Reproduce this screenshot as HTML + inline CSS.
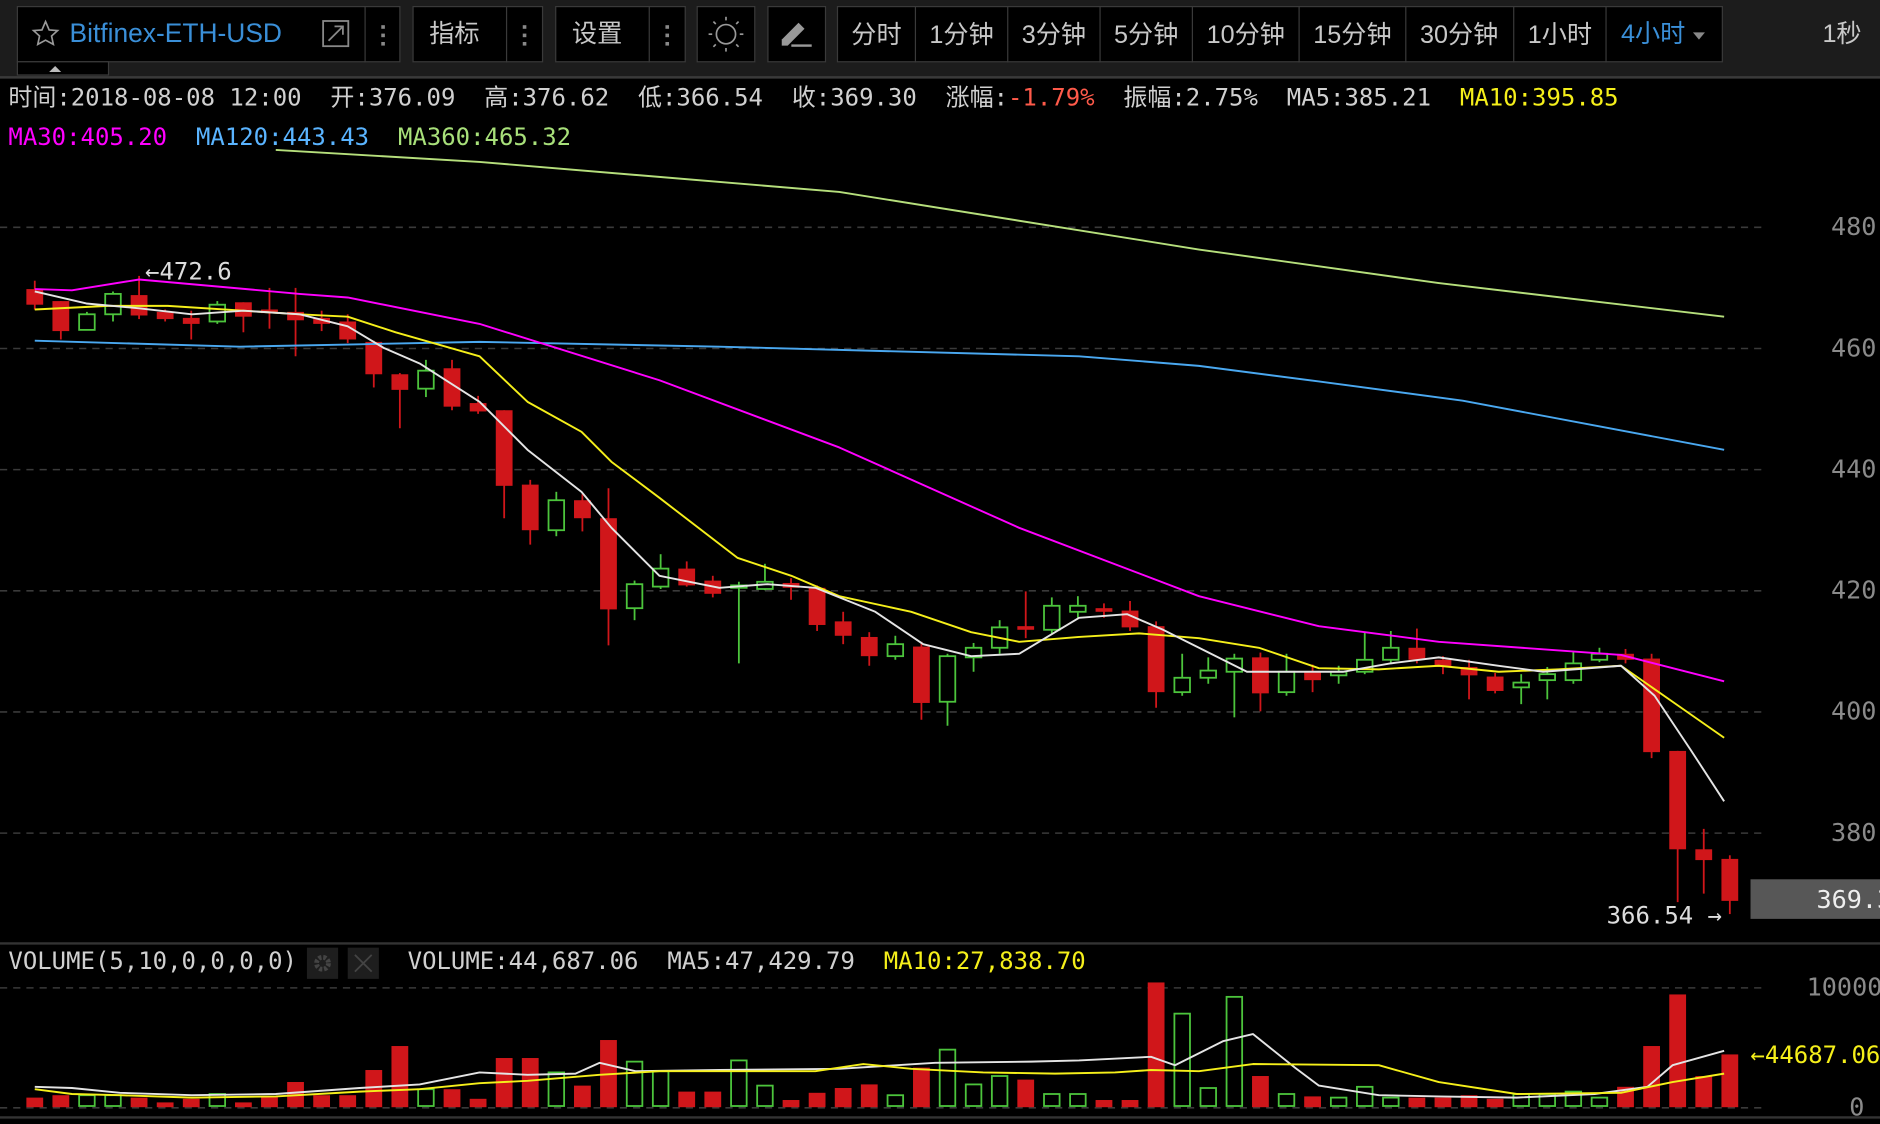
<!DOCTYPE html>
<html><head><meta charset="utf-8">
<style>
html,body{margin:0;padding:0;background:#000;width:1880px;height:1124px;overflow:hidden}
svg{display:block}
.tb{font-family:"Liberation Sans","Noto Sans CJK SC",sans-serif;font-size:21px;fill:#c8c8c8}
.mono{font-family:"DejaVu Sans Mono","Liberation Mono","Noto Sans CJK SC",monospace;font-size:20px;fill:#d0d0d0;white-space:pre}
.ax{font-family:"DejaVu Sans Mono","Liberation Mono",monospace;font-size:21px;fill:#8a8a8a}
</style></head><body>
<svg id="s" width="1880" height="1124" viewBox="0 0 1568 937" preserveAspectRatio="none" xmlns="http://www.w3.org/2000/svg" xml:space="preserve">
<rect width="1568" height="937" fill="#000"/>
<rect width="1568" height="64" fill="#1c1c1c"/>
<line x1="0" y1="64.5" x2="1568" y2="64.5" stroke="#3a3a3a" stroke-width="2"/>
<rect x="14.5" y="5.5" width="319" height="46" fill="#000" stroke="#3a3a3a"/>
<line x1="304.5" y1="5" x2="304.5" y2="52" stroke="#3a3a3a"/>
<rect x="14.5" y="51.5" width="76" height="11" fill="#000" stroke="#3a3a3a"/>
<path d="M41 60 L46 55 L51 60 Z" fill="#bbb"/>
<path d="M38 18 L41 25 L48 25.5 L43 30 L44.5 37 L38 33.5 L31.5 37 L33 30 L28 25.5 L35 25 Z" fill="none" stroke="#999" stroke-width="1.4"/>
<text x="58" y="35" class="tb" style="fill:#3a8fd8;font-size:22px">Bitfinex-ETH-USD</text>
<rect x="269.5" y="17.5" width="21" height="21" fill="none" stroke="#888" stroke-width="1.5"/>
<path d="M274 34 L286 22 M279 22 L286 22 L286 29" fill="none" stroke="#888" stroke-width="1.5"/>
<g fill="#888"><rect x="318" y="21" width="3" height="3"/><rect x="318" y="28" width="3" height="3"/><rect x="318" y="35" width="3" height="3"/></g>
<rect x="344.5" y="5.5" width="108" height="46" fill="#000" stroke="#3a3a3a"/>
<line x1="422.5" y1="5" x2="422.5" y2="52" stroke="#3a3a3a"/>
<text x="358" y="35" class="tb">指标</text>
<g fill="#888"><rect x="436" y="21" width="3" height="3"/><rect x="436" y="28" width="3" height="3"/><rect x="436" y="35" width="3" height="3"/></g>
<rect x="463.5" y="5.5" width="108" height="46" fill="#000" stroke="#3a3a3a"/>
<line x1="541.5" y1="5" x2="541.5" y2="52" stroke="#3a3a3a"/>
<text x="477" y="35" class="tb">设置</text>
<g fill="#888"><rect x="555" y="21" width="3" height="3"/><rect x="555" y="28" width="3" height="3"/><rect x="555" y="35" width="3" height="3"/></g>
<rect x="581.5" y="5.5" width="48" height="46" fill="#000" stroke="#3a3a3a"/>
<circle cx="605.5" cy="28.5" r="8" fill="none" stroke="#999" stroke-width="1.4"/>
<g stroke="#999" stroke-width="1.4"><line x1="605.5" y1="14" x2="605.5" y2="17"/><line x1="605.5" y1="40" x2="605.5" y2="43"/><line x1="591" y1="28.5" x2="594" y2="28.5"/><line x1="617" y1="28.5" x2="620" y2="28.5"/><line x1="595" y1="18" x2="597" y2="20"/><line x1="614" y1="37" x2="616" y2="39"/><line x1="595" y1="39" x2="597" y2="37"/><line x1="614" y1="20" x2="616" y2="18"/></g>
<rect x="640.5" y="5.5" width="48" height="46" fill="#000" stroke="#3a3a3a"/>
<path d="M652 38 L652 33 L666 19 L671 24 L657 38 Z" fill="#999"/>
<rect x="660" y="37" width="17" height="2" fill="#999"/>
<rect x="698.5" y="5.5" width="738" height="46" fill="#000" stroke="#3a3a3a"/>
<g stroke="#3a3a3a"><line x1="763.5" y1="5" x2="763.5" y2="52"/><line x1="840.5" y1="5" x2="840.5" y2="52"/><line x1="917.5" y1="5" x2="917.5" y2="52"/><line x1="994.5" y1="5" x2="994.5" y2="52"/><line x1="1083.5" y1="5" x2="1083.5" y2="52"/><line x1="1172.5" y1="5" x2="1172.5" y2="52"/><line x1="1262.5" y1="5" x2="1262.5" y2="52"/><line x1="1339.5" y1="5" x2="1339.5" y2="52"/></g>
<g class="tb" text-anchor="middle">
<text x="731" y="36">分时</text><text x="802" y="36">1分钟</text><text x="879" y="36">3分钟</text><text x="956" y="36">5分钟</text><text x="1039" y="36">10分钟</text><text x="1128" y="36">15分钟</text><text x="1217" y="36">30分钟</text><text x="1301" y="36">1小时</text>
</g>
<text x="1352" y="35" class="tb" style="fill:#3a8fd8">4小时</text>
<path d="M1412 27 L1422 27 L1417 33 Z" fill="#888"/>
<text x="1520" y="35" class="tb">1秒</text>
<text x="7" y="88" class="mono">时间:2018-08-08 12:00  开:376.09  高:376.62  低:366.54  收:369.30  涨幅:<tspan fill="#ff5a4a">-1.79%</tspan>  振幅:2.75%  MA5:385.21  <tspan fill="#f5ef1a">MA10:395.85</tspan></text>
<text x="7" y="121" class="mono"><tspan fill="#ff00ff">MA30:405.20</tspan>  <tspan fill="#5ab4ff">MA120:443.43</tspan>  <tspan fill="#a8e07a">MA360:465.32</tspan></text>
<g stroke="#3a3a3a" stroke-dasharray="6,5" stroke-width="1.3">
<line x1="0" y1="189.5" x2="1470" y2="189.5"/><line x1="0" y1="290.5" x2="1470" y2="290.5"/><line x1="0" y1="391.5" x2="1470" y2="391.5"/><line x1="0" y1="492.5" x2="1470" y2="492.5"/><line x1="0" y1="593.5" x2="1470" y2="593.5"/><line x1="0" y1="694.5" x2="1470" y2="694.5"/>
<line x1="0" y1="823.5" x2="1470" y2="823.5"/><line x1="0" y1="923.5" x2="1470" y2="923.5"/>
</g>
<g class="ax" text-anchor="end">
<text x="1565" y="196">480</text><text x="1565" y="297">460</text><text x="1565" y="398">440</text><text x="1565" y="499">420</text><text x="1565" y="600">400</text><text x="1565" y="701">380</text>
<text x="1570" y="830">10000</text><text x="1555" y="930">0</text>
</g>
<rect x="1460" y="733" width="108" height="33" fill="#575757"/>
<text x="1515" y="757" class="ax" style="fill:#eee;font-size:21px">369.3</text>
<line x1="0" y1="786.5" x2="1568" y2="786.5" stroke="#333" stroke-width="2"/>
<line x1="0" y1="931.5" x2="1568" y2="931.5" stroke="#333" stroke-width="2"/>
<text x="121" y="233" class="mono" style="fill:#ddd">←472.6</text>
<text x="1340" y="770" class="mono" style="fill:#ddd">366.54 →</text>
<text x="7" y="808" class="mono">VOLUME(5,10,0,0,0,0)</text>
<rect x="256" y="790" width="26" height="26" fill="#1e1e1e"/>
<circle cx="269" cy="803" r="5" fill="none" stroke="#444" stroke-width="4" stroke-dasharray="2.5,1.5"/>
<rect x="290" y="790" width="26" height="26" fill="#1e1e1e"/>
<path d="M296 796 L310 810 M310 796 L296 810" stroke="#444" stroke-width="1.5"/>
<text x="340" y="808" class="mono">VOLUME:44,687.06  MA5:47,429.79  <tspan fill="#f5ef1a">MA10:27,838.70</tspan></text>
<text x="1460" y="886" class="mono" style="fill:#f5ef1a">←44687.06</text>
<g id="candles"></g>
<g fill="none" stroke-width="1.6" stroke-linejoin="round">
<polyline stroke="#b6df7c" points="230,125 400,135 700,160 1000,208 1200,236 1438,264"/>
<polyline stroke="#4aa8f0" points="29,284 200,289 300,287 400,285 600,289 900,297 1000,305 1100,318 1220,334 1438,375"/>
<polyline stroke="#ff00ff" points="29,241 60,242 116,233 250,245 290,248 400,270 550,317 700,373 850,440 1000,497 1100,522 1200,535 1352,546 1438,568"/>
<polyline stroke="#f5ef1a" points="29,258 90,255 140,255 250,262 290,264 330,277 400,297 440,335 485,360 510,385 550,415 615,465 660,480 700,497 760,510 810,527 850,535 900,531 950,528 1000,532 1050,540 1100,557 1150,558 1200,555 1250,560 1300,558 1352,555 1395,585 1438,615"/>
<polyline stroke="#e4e4e4" points="29,243 72,253 116,257 160,262 203,259 250,262 290,272 320,290 350,303 400,335 440,375 485,410 510,440 550,480 600,490 640,487 680,490 730,510 770,537 810,547 850,545 900,515 940,512 970,525 1000,540 1040,560 1070,560 1120,560 1160,553 1200,548 1250,555 1287,560 1352,555 1380,580 1410,625 1438,668"/>
<polyline stroke="#e4e4e4" points="29,906 60,907 100,911 160,913 230,912 300,907 350,904 400,894 440,896 480,895 500,886 530,893 600,892 700,891 780,886 860,885 900,884 960,881 980,888 1020,868 1045,862 1080,890 1100,905 1150,913 1200,914 1265,915 1330,912 1374,906 1395,888 1438,876"/>
<polyline stroke="#f5ef1a" points="29,908 60,912 100,913 160,915 230,914 300,910 350,908 400,903 440,901 500,896 550,893 600,893 680,893 720,887 760,891 820,894 880,895 930,894 960,892 1000,893 1045,887 1150,888 1200,902 1265,912 1352,911 1395,902 1438,895"/>
</g>
</svg>
<script>
var d=[
[0,241,254,234,258],[0,251,276,251,283],[1,262,275,260,275],[1,245,262,243,268],[0,246,263,230,266],[0,260,266,258,268],[0,265,270,259,283],[1,254,268,251,270],[0,252,264,252,277],[0,258,261,240,274],[0,260,267,240,297],[0,265,270,259,276],[0,268,283,262,286],[0,285,312,284,323],[0,312,325,311,357],[1,309,324,300,331],[0,307,339,300,342],[0,336,343,330,345],[0,342,405,342,432],[0,404,442,400,454],[1,417,442,410,447],[0,417,432,412,443],[0,432,508,407,538],[1,487,507,484,517],[1,474,489,462,491],[0,474,488,468,489],[0,484,495,480,498],[1,488,490,485,553],[1,485,491,470,492],[0,486,490,482,500],[0,490,521,488,526],[0,518,530,510,537],[0,531,547,527,555],[1,537,547,530,550],[0,539,586,535,600],[1,547,585,545,605],[1,540,548,536,560],[1,523,540,517,545],[0,522,525,493,532],[1,505,525,498,528],[1,505,510,497,515],[0,507,510,503,515],[0,509,523,501,526],[0,522,577,518,590],[1,565,577,545,580],[1,559,565,548,570],[1,549,560,545,598],[0,548,578,544,593],[1,560,577,545,580],[0,560,567,554,577],[1,560,563,555,570],[1,550,560,527,562],[1,540,550,526,553],[0,540,550,524,553],[0,550,556,547,562],[0,556,563,550,583],[0,564,576,561,578],[1,569,573,562,587],[1,562,567,556,583],[1,553,567,543,570],[1,545,550,540,552],[0,545,550,541,553],[0,549,627,545,632],[0,626,708,626,752],[0,708,717,691,745],[0,716,751,713,762]];
var v=[915,913,913,913,915,919,916,912,919,914,902,913,913,892,872,908,908,916,882,882,894,905,867,885,893,910,910,884,905,917,911,907,904,913,890,875,904,897,900,912,912,917,917,819,845,907,831,897,912,914,915,906,915,915,915,913,916,912,912,910,915,906,872,829,897,879];
var s='',R='#d0161a',G='#4cc43c';
for(var i=0;i<d.length;i++){var c=d[i],x=29+i*21.75,col=c[0]?G:R;
s+='<line x1="'+x+'" y1="'+c[3]+'" x2="'+x+'" y2="'+c[4]+'" stroke="'+col+'" stroke-width="1.5"/>';
var h=Math.max(c[2]-c[1],1.5);
if(c[0]) s+='<rect x="'+(x-6.5)+'" y="'+c[1]+'" width="13" height="'+h+'" fill="#000" stroke="'+G+'" stroke-width="1.5"/>';
else s+='<rect x="'+(x-7)+'" y="'+c[1]+'" width="14" height="'+h+'" fill="'+R+'"/>';
var t=v[i],b=923;
if(c[0]) s+='<rect x="'+(x-6.5)+'" y="'+t+'" width="13" height="'+(b-1-t)+'" fill="#000" stroke="'+G+'" stroke-width="1.5"/>';
else s+='<rect x="'+(x-7)+'" y="'+t+'" width="14" height="'+(b-t)+'" fill="'+R+'"/>';}
document.getElementById('candles').innerHTML=s;
</script>
</body></html>
